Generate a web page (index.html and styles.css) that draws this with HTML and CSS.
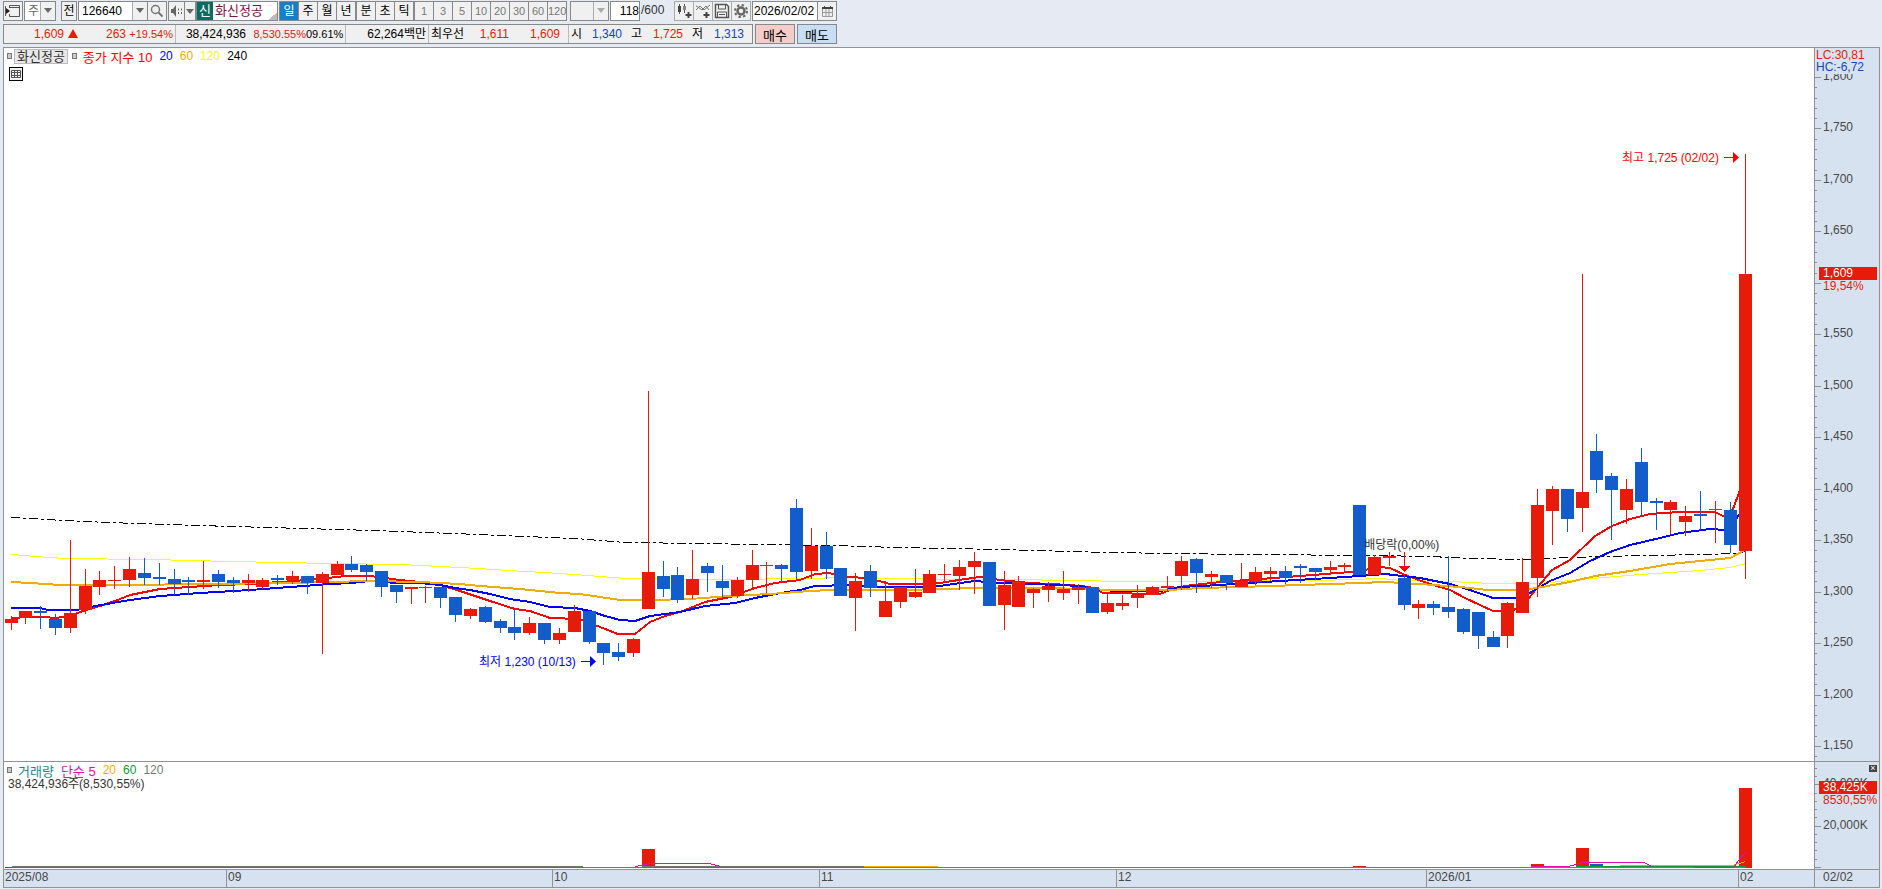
FILE: index.html
```html
<!DOCTYPE html>
<html lang="ko">
<head>
    <meta charset="UTF-8">
    <meta name="viewport" content="width=device-width, initial-scale=1">
    <title>화신정공 126640</title>
    <link rel="stylesheet" href="styles.css">
</head>
<body>
    <header>
        <div class="toolbar">
            <button class="tool" aria-label="패널">
                <svg width="16" height="14" viewBox="0 0 16 14"><path d="M4.500 4V1.500H14.500V12.500H4.500V10M4 3.500H14" fill="none" stroke="#555"/><path d="M1 4l4 3-4 3z" fill="#222"/><path d="M.5 2v10" stroke="#555"/></svg>
            </button>
            <label class="combo kind">
                <select aria-label="종류"><option>주</option></select>
            </label>
            <button class="tool prev">전</button>
            <div class="group">
                <label class="combo code"><input type="text" value="126640" aria-label="종목코드"></label>
                <button class="tool" aria-label="검색">
                    <svg width="14" height="14" viewBox="0 0 14 14"><circle cx="5.500" cy="5.500" r="4" fill="none" stroke="#777" stroke-width="1.500"/><path d="M8.500 8.500l4 4" stroke="#777" stroke-width="2"/></svg>
                </button>
            </div>
            <div class="group sound">
                <button class="tool" aria-label="소리">
                    <svg width="13" height="14" viewBox="0 0 13 14"><path d="M1 5h2l3-4v12l-3-4H1z" fill="#666"/><path d="M8 5.500h1M11 5.500h1M8 9h1M11 9h1" stroke="#666" stroke-width="2"/></svg>
                </button>
                <button class="tool drop" aria-label="소리 메뉴"></button>
            </div>
            <div class="stock"><b>신</b><span>화신정공</span></div>
            <div class="group period">
                <button class="active">일</button><button>주</button><button>월</button><button>년</button>
            </div>
            <div class="group period">
                <button>분</button><button>초</button><button>틱</button>
            </div>
            <div class="group period minutes">
                <button>1</button><button>3</button><button>5</button><button>10</button><button>20</button><button>30</button><button>60</button><button>120</button>
            </div>
            <label class="combo blank"><select aria-label="분 선택" disabled><option></option></select></label>
            <div class="count"><input type="text" value="118" aria-label="봉 개수"><span>/600</span></div>
            <div class="group icons">
                <button class="tool" aria-label="차트 추가">
                    <svg width="16" height="16" viewBox="0 0 16 16"><path d="M3.500 1v10M8.500 1v9" stroke="#555"/><path d="M2 3h3v6H2z" fill="#444"/><path d="M7 3h3v4H7z" fill="#888"/><path d="M12.500 9v6M9.500 12h6" stroke="#444" stroke-width="2"/></svg>
                </button>
                <button class="tool" aria-label="지표 추가">
                    <svg width="16" height="16" viewBox="0 0 16 16"><path d="M1 7l4-4 4 4 6-5M1 3l2 1 4 3 4-4 3 4" fill="none" stroke="#777"/><path d="M11.500 9v6M8.500 12h6" stroke="#444" stroke-width="2"/></svg>
                </button>
                <button class="tool" aria-label="저장">
                    <svg width="16" height="16" viewBox="0 0 16 16" fill="none" stroke="#555"><path d="M1.500 1.500h11l2 2v11h-13z" stroke-width="1.500"/><path d="M4.500 2v4h7V2M3.500 14V9h9v5M5 11.500h6"/></svg>
                </button>
                <button class="tool" aria-label="설정">
                    <svg width="16" height="16" viewBox="0 0 16 16" fill="none" stroke="#666"><circle cx="8" cy="8" r="3.500" stroke-width="2.500"/><circle cx="8" cy="8" r="6" stroke-width="2" stroke-dasharray="2.350 2.350"/></svg>
                </button>
            </div>
            <div class="group date">
                <input type="text" value="2026/02/02" aria-label="기준일">
                <button class="tool" aria-label="달력">
                    <svg width="13" height="13" viewBox="0 0 13 13"><path d="M1.500 2.500h10v9h-10zM5 4v7M8 4v7M2 7.500h9" fill="none" stroke="#999"/><path d="M1 3h11" stroke="#444" stroke-width="2"/><path d="M3.500 1v2M9.500 1v2" stroke="#444"/></svg>
                </button>
            </div>
        </div>
        <div class="summary">
            <div class="quote">
                <span class="up">1,609<i class="tri"></i></span>
                <span class="up">263</span>
                <span class="up rate end">+19.54%</span>
                <span>38,424,936</span>
                <span class="up rate">8,530.55%</span>
                <span class="rate end">09.61%</span>
                <span class="end">62,264백만</span>
                <span class="name">최우선</span>
                <span class="up">1,611</span>
                <span class="up end wide">1,609</span>
                <span class="name">시</span>
                <span class="down">1,340</span>
                <span>고</span>
                <span class="up">1,725</span>
                <span>저</span>
                <span class="down">1,313</span>
            </div>
            <button class="trade buy">매수</button>
            <button class="trade sell">매도</button>
        </div>
    </header>

    <main>
        <section class="price">
            <div class="plot">
                <svg id="price-chart" viewBox="4 48 1810 713" preserveAspectRatio="none"></svg>
                <div class="legend">
                    <i class="dot"></i><span class="badge">화신정공</span><i class="dot"></i>
                    <span class="ma10 title">종가 지수 10</span><span class="ma20">20</span><span class="ma60">60</span><span class="ma120">120</span><span class="ma240">240</span>
                </div>
                <button class="table-btn" aria-label="데이터 표">
                    <svg width="14" height="14" viewBox="0 0 14 14" fill="none" stroke="#555"><path d="M2.500 3.500h9v7h-9zM2.500 5.500h9M2.500 8.500h9M5.500 3.500v7M8.500 3.500v7"/></svg>
                </button>
                <div class="note high">최고 1,725 (02/02)
                    <svg width="15" height="12" viewBox="0 0 15 12"><path d="M0 5.500h10" stroke="currentColor"/><path d="M9 0l6 5.500L9 11z" fill="currentColor"/></svg>
                </div>
                <div class="note low">최저 1,230 (10/13)
                    <svg width="15" height="12" viewBox="0 0 15 12"><path d="M0 5.500h10" stroke="currentColor"/><path d="M9 0l6 5.500L9 11z" fill="currentColor"/></svg>
                </div>
                <div class="note exdiv">배당락(0,00%)</div>
            </div>
            <div class="axis" id="price-axis">
                <div class="change"><span class="up">LC:30,81</span><span class="down">HC:-6,72</span></div>
                <div class="tag now"><b>1,609</b><span>19,54%</span></div>
            </div>
        </section>
        <section class="volume">
            <div class="plot">
                <svg id="volume-chart" viewBox="4 762 1810 107" preserveAspectRatio="none"></svg>
                <div class="legend">
                    <i class="dot"></i><span class="vol title">거래량</span><span class="v5 title">단순 5</span><span class="ma60">20</span><span class="v60">60</span><span class="v120">120</span>
                </div>
                <p class="total">38,424,936주(8,530,55%)</p>
            </div>
            <div class="axis" id="volume-axis">
                <button class="close" aria-label="닫기">×</button>
                <div class="tag vol-now"><b>38,425K</b><span>8530,55%</span></div>
            </div>
        </section>
        <footer>
            <div class="months">
                <span>2025/08</span><span>09</span><span>10</span><span>11</span><span>12</span><span>2026/01</span><span>02</span>
            </div>
            <span class="today">02/02</span>
        </footer>
    </main>
    <script src="chart.js"></script>
</body>
</html>
```
FILE: styles.css
```css
* {
    margin: 0;
    padding: 0;
    box-sizing: border-box;
}

html {
    font-family: "Liberation Sans", "Noto Sans CJK KR", sans-serif;
    font-size: 12px;
}

body {
    height: 100vh;
    display: flex;
    flex-direction: column;
    background-color: #e6eaf3;
    color: #000;
    overflow: hidden;
}

button, input, select {
    font: inherit;
    color: inherit;
    border: none;
    border-radius: 0;
    background: none;
}

svg {
    display: block;
}

header {
    padding: 1px 3px 0;
    white-space: nowrap;
}

.toolbar, .summary, .group {
    display: flex;
}

.toolbar {
    height: 20px;
    line-height: 18px;
}

.tool {
    width: 20px;
    height: 20px;
    display: flex;
    justify-content: center;
    align-items: center;
    background-color: #f0f0f0;
    border: 1px solid #888;
}

.combo {
    position: relative;
    display: block;
    height: 20px;
    background-color: #fff;
    border: 1px solid #888;
}

.combo select, .combo input {
    display: block;
    width: 100%;
    height: 18px;
    appearance: none;
    padding-left: 3px;
}

.combo::after, .drop::after {
    content: "";
    border: 4px solid transparent;
    border-top: 5px solid #666;
    border-bottom: none;
}

.combo::after {
    position: absolute;
    right: 3px;
    top: 6px;
}

.combo::before {
    content: "";
    position: absolute;
    right: 0;
    top: 0;
    width: 14px;
    height: 18px;
    background-color: #f0f0f0;
    border-left: 1px solid #aaa;
}

.kind {
    width: 32px;
    margin-left: 1px;
    color: #666;
}

.prev {
    width: 16px;
    margin: 0 1px 0 5px;
}

.code {
    width: 70px;
}

.group .tool {
    margin-left: -1px;
}

.sound {
    margin-left: 2px;
}

.sound .tool {
    width: 17px;
}

.sound .drop {
    width: 12px;
}

.stock {
    display: flex;
    width: 82px;
    margin-right: 1px;
    background-color: #fff;
    border: 1px solid #888;
    color: #80104c;
    font-size: 13px;
    background-image: linear-gradient(135deg, transparent 50%, #bbb 50%);
    background-size: 8px 8px;
    background-position: right bottom;
    background-repeat: no-repeat;
}

.stock b {
    width: 16px;
    margin-right: 2px;
    background-color: #0b6b60;
    color: #fff;
    font-weight: normal;
    text-align: center;
}

.period button {
    width: 20px;
    height: 20px;
    margin-right: -1px;
    background-color: #f0f0f0;
    border: 1px solid #888;
}

.period .active {
    background-color: #1580c8;
    color: #fff;
}

.period {
    margin-right: 1px;
}

.minutes {
    color: #777;
}

.minutes button {
    font-size: 11px;
}

.blank {
    width: 39px;
    margin: 0 1px 0 3px;
    background-color: #f0f0f0;
}

.blank::after {
    border-top-color: #aaa;
}

.count {
    display: flex;
    width: 65px;
    color: #333;
}

.count input {
    width: 30px;
    height: 20px;
    margin-right: 1px;
    background-color: #fff;
    border: 1px solid #888;
    color: #000;
    text-align: right;
}

.icons .tool {
    border-color: #aaa;
}

.date input {
    width: 66px;
    height: 20px;
    background-color: #fff;
    border: 1px solid #888;
    padding-left: 1px;
    margin-left: 1px;
}

.summary {
    margin-top: 3px;
    gap: 2px;
}

.quote {
    display: grid;
    grid-template-columns: 74px 48px 50px 70px 60px 40px 83px 39px 41px 60px 15px 38px 20px 41px 20px 41px;
    width: 750px;
    height: 20px;
    line-height: 18px;
    background-color: #f0f0f0;
    border: 1px solid #888;
    text-align: right;
}

.quote .rate {
    font-size: 11px;
}

.quote .end {
    padding-right: 2px;
    border-right: 1px solid #bbb;
}

.quote .wide {
    padding-right: 8px;
}

.quote .name {
    text-align: left;
    padding-left: 2px;
}

.tri {
    display: inline-block;
    margin-left: 4px;
    border: 5px solid transparent;
    border-top: none;
    border-bottom: 9px solid #e81a09;
}

.up {
    color: #e81a09;
}

.down {
    color: #1346c0;
}

.trade {
    width: 40px;
    height: 20px;
    border: 1px solid #888;
    font-size: 13px;
}

.buy {
    background-color: #f5cdc8;
}

.sell {
    background-color: #c8def4;
}

main {
    flex: 1;
    display: flex;
    flex-direction: column;
    margin: 3px 2px 1px 3px;
    border: 1px solid #929292;
    background-color: #fff;
    min-height: 0;
}

section, footer {
    display: grid;
    grid-template-columns: 1fr 65px;
}

.price {
    flex: 1;
    min-height: 0;
}

.volume {
    height: 108px;
    border-top: 1px solid #929292;
}

.plot {
    position: relative;
    min-height: 0;
}

.plot > svg {
    position: absolute;
    width: 100%;
    height: 100%;
    shape-rendering: crispEdges;
}

.axis {
    position: relative;
    overflow: hidden;
    background-color: #d7e2f0;
    border-left: 1px solid #929292;
    color: #484848;
}

/* ruler marks and their numbers, placed by value */
.mark {
    position: absolute;
    left: 0;
    width: 2px;
    height: 1px;
    background-color: #929292;
}

.mark.major {
    width: 6px;
}

.mark span {
    position: absolute;
    left: 8px;
    top: -8px;
    line-height: 15px;
}

.change {
    position: absolute;
    z-index: 1;
    top: 1px;
    left: 1px;
    right: 0;
    background-color: #d7e2f0;
    line-height: 12px;
    height: 25px;
}

.change span {
    display: block;
}

.tag {
    position: absolute;
    left: 4px;
    right: 2px;
    line-height: 12px;
    color: #e81a09;
}

.tag b {
    display: block;
    line-height: 13px;
    background-color: #e81a09;
    color: #fff;
    font-weight: normal;
}

.tag span {
    display: block;
}

.tag b, .tag span {
    padding-left: 4px;
}

.now {
    top: 30.700%;
}

.vol-now {
    top: 18%;
}

.close {
    position: absolute;
    top: 3px;
    right: 2px;
    width: 8px;
    height: 7px;
    background-color: #444;
    color: #fff;
    font-size: 9px;
    line-height: 7px;
}

.legend {
    position: relative;
    display: flex;
    align-items: center;
    height: 16px;
    padding-left: 3px;
}

.legend span {
    margin-right: 7px;
}

.legend .title, .legend .badge {
    font-size: 13px;
}

.legend .dot {
    width: 5px;
    height: 6px;
    margin-right: 2px;
    border: 1px solid #777;
    background-color: #ccc;
}

.legend .badge {
    margin-right: 4px;
    padding: 0 2px;
    line-height: 13px;
    background-color: #e8e8e8;
    border: 1px solid #bbb;
    color: #333;
}

.legend .badge + .dot {
    margin-right: 6px;
}

.ma10 { color: #f00; }
.ma20 { color: #00f; }
.ma60 { color: #f0ac00; }
.ma120 { color: #ff0; }
.ma240 { color: #000; }
.vol { color: #1d8a8a; }
.v5 { color: #e010b0; }
.v60 { color: #109838; }
.v120 { color: #777; }

.table-btn {
    position: relative;
    display: block;
    margin: 3px 0 0 5px;
    border: 1px solid #000;
    background-color: #f0f0f0;
    width: 14px;
    height: 14px;
}

.table-btn svg {
    margin: -1px;
}

.note {
    position: absolute;
    display: flex;
    align-items: center;
    gap: 5px;
    line-height: 14px;
    white-space: nowrap;
}

.high {
    right: 4.150%;
    top: 14.400%;
    color: #f00;
}

.low {
    right: 67.300%;
    top: 85.200%;
    color: #00f;
}

.exdiv {
    left: 75.150%;
    top: 68.700%;
    color: #333;
}

.volume .dot {
    margin-right: 6px;
}

.total {
    position: relative;
    padding-left: 4px;
    line-height: 12px;
    color: #333;
}

footer {
    height: 18px;
    line-height: 15px;
    border-top: 1px solid #929292;
    background-color: #d7e2f0;
    color: #484848;
}

.months {
    display: grid;
    grid-template-columns: 222fr 326fr 267fr 297fr 310fr 312fr 76fr;
}

.months span {
    padding-left: 1px;
}

.months span + span, .today {
    border-left: 1px solid #929292;
}

.today {
    padding-left: 8px;
}
```
FILE: chart.js
```js
const RED = '#e81a09';
const BLUE = '#125ccc';

// high, body top, body bottom, low; r = up day, b = down day
const candles = `
r616,619,623,630 r611,611,618,624 b606,611,613,629 b614,619,628,635 r540,613,628,633 r569,586,610,614
r571,580,587,595 r566,580,581,589 r557,569,580,587 b558,573,578,585 b563,577,579,585 b569,579,584,595
b577,580,582,595 r561,580,582,589 b570,574,582,588 b577,580,583,593 r574,580,583,592 r578,580,587,589
b575,578,580,585 r571,576,580,584 b576,576,583,594 r572,574,583,654 r561,564,575,575 b556,564,570,572
b564,565,572,581 b571,571,587,597 b585,585,592,603 r587,587,589,604 r586,587,588,603 b587,587,598,608
b597,597,615,622 r608,609,616,619 b606,607,622,623 b619,621,628,633 b610,627,633,640 r617,623,633,635
b623,623,640,644 r628,633,640,644 r605,611,632,632 b611,611,642,644 b643,643,653,665 b643,652,657,661
r638,639,653,657 r391,572,609,609 b561,576,589,597 b567,575,600,603 r550,579,595,599 b563,566,573,592
b565,581,588,598 r577,580,596,598 r550,565,580,590 r562,565,566,593 b564,565,569,582 b499,508,572,580
r528,546,571,579 b532,546,569,579 b568,568,596,596 r573,581,598,631 b565,571,588,597 r581,601,617,617
r587,587,602,608 r569,592,597,598 r570,574,593,593 r564,574,575,582 r560,567,576,590 r552,561,567,594
b562,562,606,606 r571,585,605,630 r576,582,607,607 r588,589,593,608 r582,586,590,602 r571,589,593,600
r584,587,590,604 b587,587,613,613 r594,603,612,614 r595,603,606,610 r585,595,598,608 r586,587,595,595
r576,586,588,592 r556,561,576,590 b558,559,573,593 r571,574,577,588 b575,575,583,590 r563,581,587,587
r567,572,582,585 r567,571,574,581 b566,571,577,584 b564,566,568,583 b568,568,572,580 r561,567,570,575
r563,565,567,571 b505,505,575,575 r555,557,575,575 r552,556,558,566 b575,578,605,610 r600,604,608,619
b601,604,608,615 b556,607,612,618 b608,609,632,634 b612,612,636,649 b631,637,647,647 r602,603,636,648
r558,582,613,613 r489,505,578,597 r486,489,511,545 b489,489,519,532 r274,492,508,532 b434,451,480,493
b473,476,490,540 r479,489,510,524 b448,462,502,517 b498,501,503,530 r500,502,510,534 r506,516,522,536
b491,514,516,530 r501,509,510,543 b502,510,545,553 r154,274,551,579`.trim().split(/\s+/);

const averages = [
    { color: '#000', width: 1, dash: '9 3 3 3', points: '11,517 63,520 107,522 197,525 373,530 478,534 525,536 575,538 625,542 700,543 760,544 835,545 895,547 945,548 1000,549 1070,551 1110,552 1170,553 1250,554 1370,555 1430,556 1470,558 1520,559 1545,558 1600,556 1650,555 1700,554 1735,553 1745,551' },
    { color: '#ff0', width: 1, points: '11,554 35,556 63,558 150,559 230,561 330,563 400,564 440,566 478,568 508,570 560,573 600,576 625,578 720,579 810,578 840,577 905,578 950,579 1000,579 1080,580 1120,581 1190,581 1240,580 1320,580 1380,578 1400,580 1450,581 1490,583 1540,583 1580,579 1640,574 1700,570 1730,567 1745,563' },
    { color: '#f00', width: 2, points: '11,618 30,617 45,617 55,618 70,616 80,612 100,606 115,601 130,595 160,589 190,587 220,585 250,584 280,582 320,579 345,576 370,576 400,580 420,582 440,585 460,591 490,601 515,609 530,611 550,618 580,619 600,627 618,634 635,634 650,622 665,616 680,612 705,602 730,597 755,588 775,583 800,580 815,574 830,573 840,577 855,577 875,580 890,584 910,584 940,583 965,579 980,577 1000,580 1030,583 1070,585 1090,587 1103,593 1160,594 1170,590 1185,586 1220,582 1260,579 1300,576 1350,572 1370,569 1380,567 1390,568 1405,575 1430,584 1450,590 1465,598 1480,605 1493,611 1512,611 1525,603 1537,588 1552,570 1570,560 1595,536 1612,526 1630,519 1650,514 1680,512 1715,512 1727,518 1733,509 1739,493 1745,470' },
    { color: '#00f', width: 2, points: '11,608 40,608 48,610 77,610 95,606 130,600 160,596 200,593 250,590 290,587 330,584 352,583 370,581 397,583 420,583 440,585 455,588 470,590 490,594 510,599 530,602 550,607 575,608 590,611 605,616 620,620 635,621 650,616 680,612 705,606 735,603 755,598 775,594 800,590 815,586 850,585 880,587 910,587 940,586 960,583 975,581 1000,583 1060,585 1080,586 1100,590 1120,591 1160,591 1180,587 1220,585 1280,581 1330,578 1360,576 1385,574 1420,578 1450,584 1470,590 1493,598 1520,598 1535,590 1550,581 1570,573 1590,561 1610,552 1630,545 1660,538 1680,533 1710,529 1725,530 1735,520 1745,508' },
    { color: '#f0ac00', width: 2, points: '11,582 30,583 60,585 130,585 200,584 290,583 330,582 370,581 420,582 460,584 480,586 520,589 560,593 580,594 600,597 620,600 650,600 690,599 730,596 770,594 810,591 830,590 900,590 945,589 975,588 1040,588 1090,589 1110,590 1170,590 1200,588 1240,587 1300,585 1360,583 1385,582 1420,584 1460,587 1488,590 1525,590 1570,582 1595,576 1630,571 1670,564 1710,560 1730,558 1745,550' }
];

// day index, colour, top of bar
const volumes = [[0, BLUE, 867], [43, RED, 849], [91, RED, 866], [103, RED, 864], [106, RED, 848], [107, BLUE, 864], [117, RED, 788]];

const volumeLines = [
    { color: '#777', width: 1, points: '11,866 582,866' },
    { color: '#777', width: 1, points: '582,867 641,867' },
    { color: '#777', width: 1, points: '641,866 863,866' },
    { color: '#777', width: 1, points: '863,867 1745,867' },
    { color: '#109838', width: 1, points: '11,867 582,867' },
    { color: '#109838', width: 1, points: '641,867 863,867' },
    { color: '#109838', width: 1, points: '1575,866 1745,866' },
    { color: '#f0ac00', width: 1, points: '863,866 937,866' },
    { color: '#f0ac00', width: 1, points: '1619,865 1732,865 1745,861' },
    { color: '#e010b0', width: 1, points: '635,866 645,864 650,863 709,863 720,866' },
    { color: '#e010b0', width: 1, points: '1530,866 1568,866 1582,862 1643,862 1652,866' },
    { color: '#e010b0', width: 1, points: '1693,867 1733,867 1738,860 1745,852' }
];

const dayX = i => Math.floor(11 + i * 14.821);

function rect(x, y, w, h, color) {
    return `<rect x="${x}" y="${y}" width="${w}" height="${h}" fill="${color}"/>`;
}

function line({ color, width, points, dash }) {
    // one pixel lines run through pixel centres
    const shift = width % 2 / 2;
    return `<polyline points="${points}" transform="translate(${shift} ${shift})" fill="none" stroke="${color}" stroke-width="${width}" stroke-dasharray="${dash || 'none'}"/>`;
}

function drawPrice() {
    let out = averages.map(line).join('');
    candles.forEach((candle, i) => {
        const color = candle[0] === 'r' ? RED : BLUE;
        const [high, top, bottom, low] = candle.slice(1).split(',').map(Number);
        const x = dayX(i);
        out += rect(x, high, 1, low - high, color) + rect(x - 6, top, 13, bottom - top, color);
    });
    out += '<path d="M1404 552h1v14h5l-5.500 6-5.500-6h5z" fill="#f00"/>';
    document.querySelector('#price-chart').innerHTML = out;
}

function drawVolume() {
    const bars = volumes.map(([i, color, top]) => rect(dayX(i) - 6, top, 13, 868 - top, color));
    document.querySelector('#volume-chart').innerHTML = bars.join('') + volumeLines.map(line).join('');
}

function drawAxis(id, { from, to, step, major, top, perUnit, height, suffix }) {
    const axis = document.querySelector(id);
    for (let value = from; value >= to; value -= step) {
        const mark = document.createElement('div');
        mark.className = 'mark';
        mark.style.top = `${(top + (from - value) * perUnit) / height * 100}%`;
        if (value % major === 0) {
            mark.classList.add('major');
            if (value && value !== 1600) mark.innerHTML = `<span>${value.toLocaleString('en-US')}${suffix}</span>`;
        }
        axis.prepend(mark);
    }
}

drawPrice();
drawVolume();
drawAxis('#price-axis', { from: 1800, to: 1140, step: 10, major: 50, top: 29, perUnit: 1.0292, height: 713, suffix: '' });
drawAxis('#volume-axis', { from: 48000, to: 0, step: 4000, major: 20000, top: 6, perUnit: 0.00206, height: 107, suffix: 'K' });
```
